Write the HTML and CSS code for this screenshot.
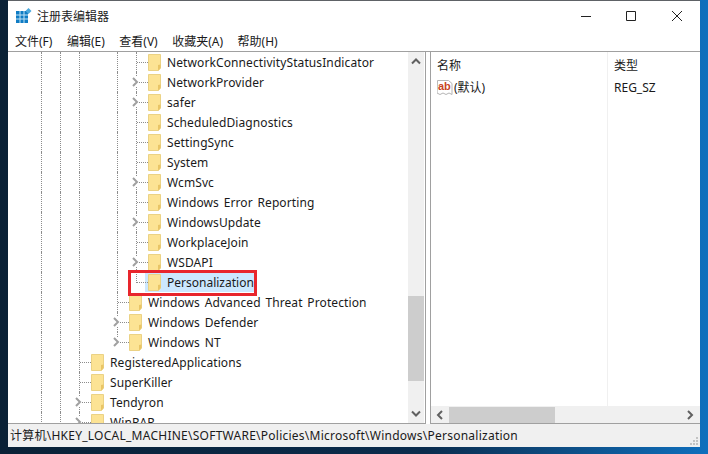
FILE: index.html
```html
<!DOCTYPE html>
<html lang="zh-CN">
<head>
<meta charset="utf-8">
<title>注册表编辑器</title>
<link rel="stylesheet" href="styles.css">
</head>
<body>
<svg class="defs" width="0" height="0">
  <symbol id="folder" viewBox="0 0 13 17">
    <path d="M.5.5h12v13.500l-2 2.500h-10z" fill="#fce394" stroke="#ebd285"/>
    <path d="M10 11l2.500-.5v3.500l-2.500 2.500z" fill="#e9c566"/>
  </symbol>
  <symbol id="chev" viewBox="0 0 7 10">
    <path d="M1 1l4 4-4 4" fill="none" stroke="#a0a0a0" stroke-width="2"/>
  </symbol>
</svg>
<div class="window">
  <header class="titlebar">
    <svg class="appicon" width="16" height="16" viewBox="0 0 16 16">
      <path d="M0 3h12v12H0z" fill="#0f7cc4"/>
      <path d="M4 3v12M8 3v12M0 7h12M0 11h12" stroke="#bfe2f5" stroke-width="1"/>
      <path d="M12.500 0l3 3-3 3-3-3z" fill="#4ba8dc"/>
    </svg>
    <span class="title">注册表编辑器</span>
    <div class="controls">
      <svg width="10" height="10" viewBox="0 0 10 10"><path d="M0 5.500h10" stroke="#222"/></svg>
      <svg width="10" height="10" viewBox="0 0 10 10"><path d="M.5.500h9v9h-9z" fill="none" stroke="#222"/></svg>
      <svg width="10" height="10" viewBox="0 0 10 10"><path d="M0 0l10 10M10 0L0 10" stroke="#222"/></svg>
    </div>
  </header>
  <nav class="menubar">
    <span>文件(F)</span><span>编辑(E)</span><span>查看(V)</span><span>收藏夹(A)</span><span>帮助(H)</span>
  </nav>
  <main class="panes">
    <section class="treepane">
      <div class="tree">
        <div class="row"><i class="g on"></i><i class="g on"></i><i class="g on"></i><i class="g"></i><i class="g on"></i><i class="conn"></i><span class="item"><svg class="fd"><use href="#folder"/></svg>NetworkConnectivityStatusIndicator</span></div>
        <div class="row"><i class="g on"></i><i class="g on"></i><i class="g on"></i><i class="g"></i><i class="g on"></i><i class="conn"><svg class="ch"><use href="#chev"/></svg></i><span class="item"><svg class="fd"><use href="#folder"/></svg>NetworkProvider</span></div>
        <div class="row"><i class="g on"></i><i class="g on"></i><i class="g on"></i><i class="g"></i><i class="g on"></i><i class="conn"><svg class="ch"><use href="#chev"/></svg></i><span class="item"><svg class="fd"><use href="#folder"/></svg>safer</span></div>
        <div class="row"><i class="g on"></i><i class="g on"></i><i class="g on"></i><i class="g"></i><i class="g on"></i><i class="conn"></i><span class="item"><svg class="fd"><use href="#folder"/></svg>ScheduledDiagnostics</span></div>
        <div class="row"><i class="g on"></i><i class="g on"></i><i class="g on"></i><i class="g"></i><i class="g on"></i><i class="conn"></i><span class="item"><svg class="fd"><use href="#folder"/></svg>SettingSync</span></div>
        <div class="row"><i class="g on"></i><i class="g on"></i><i class="g on"></i><i class="g"></i><i class="g on"></i><i class="conn"></i><span class="item"><svg class="fd"><use href="#folder"/></svg>System</span></div>
        <div class="row"><i class="g on"></i><i class="g on"></i><i class="g on"></i><i class="g"></i><i class="g on"></i><i class="conn"><svg class="ch"><use href="#chev"/></svg></i><span class="item"><svg class="fd"><use href="#folder"/></svg>WcmSvc</span></div>
        <div class="row"><i class="g on"></i><i class="g on"></i><i class="g on"></i><i class="g"></i><i class="g on"></i><i class="conn"></i><span class="item"><svg class="fd"><use href="#folder"/></svg>Windows Error Reporting</span></div>
        <div class="row"><i class="g on"></i><i class="g on"></i><i class="g on"></i><i class="g"></i><i class="g on"></i><i class="conn"><svg class="ch"><use href="#chev"/></svg></i><span class="item"><svg class="fd"><use href="#folder"/></svg>WindowsUpdate</span></div>
        <div class="row"><i class="g on"></i><i class="g on"></i><i class="g on"></i><i class="g"></i><i class="g on"></i><i class="conn"></i><span class="item"><svg class="fd"><use href="#folder"/></svg>WorkplaceJoin</span></div>
        <div class="row"><i class="g on"></i><i class="g on"></i><i class="g on"></i><i class="g"></i><i class="g on"></i><i class="conn"><svg class="ch"><use href="#chev"/></svg></i><span class="item"><svg class="fd"><use href="#folder"/></svg>WSDAPI</span></div>
        <div class="row"><i class="g on"></i><i class="g on"></i><i class="g on"></i><i class="g"></i><i class="g on"></i><i class="conn last"></i><span class="item selected"><svg class="fd"><use href="#folder"/></svg>Personalization</span><b class="redbox"></b></div>
        <div class="row"><i class="g on"></i><i class="g on"></i><i class="g on"></i><i class="g"></i><i class="conn"></i><span class="item"><svg class="fd"><use href="#folder"/></svg>Windows Advanced Threat Protection</span></div>
        <div class="row"><i class="g on"></i><i class="g on"></i><i class="g on"></i><i class="g"></i><i class="conn"><svg class="ch"><use href="#chev"/></svg></i><span class="item"><svg class="fd"><use href="#folder"/></svg>Windows Defender</span></div>
        <div class="row"><i class="g on"></i><i class="g on"></i><i class="g on"></i><i class="g"></i><i class="conn last"><svg class="ch"><use href="#chev"/></svg></i><span class="item"><svg class="fd"><use href="#folder"/></svg>Windows NT</span></div>
        <div class="row"><i class="g on"></i><i class="g on"></i><i class="conn"></i><span class="item"><svg class="fd"><use href="#folder"/></svg>RegisteredApplications</span></div>
        <div class="row"><i class="g on"></i><i class="g on"></i><i class="conn"></i><span class="item"><svg class="fd"><use href="#folder"/></svg>SuperKiller</span></div>
        <div class="row"><i class="g on"></i><i class="g on"></i><i class="conn"><svg class="ch"><use href="#chev"/></svg></i><span class="item"><svg class="fd"><use href="#folder"/></svg>Tendyron</span></div>
        <div class="row"><i class="g on"></i><i class="g on"></i><i class="conn"><svg class="ch"><use href="#chev"/></svg></i><span class="item"><svg class="fd"><use href="#folder"/></svg>WinRAR</span></div>
      </div>
      <div class="vscroll">
        <svg class="arrow" width="16" height="17" viewBox="0 0 16 17"><path d="M4 11.500l4-4 4 4" fill="none" stroke="#606060" stroke-width="2"/></svg>
        <div class="vspace"></div>
        <div class="vthumb"></div>
        <div class="vspace2"></div>
        <svg class="arrow" width="16" height="17" viewBox="0 0 16 17"><path d="M4 5.500l4 4 4-4" fill="none" stroke="#606060" stroke-width="2"/></svg>
      </div>
    </section>
    <section class="listpane">
      <div class="listbody">
        <div class="lhead"><span class="cname">名称</span><span class="ctype">类型</span></div>
        <div class="lrow">
          <span class="cname"><svg class="abicon" width="16" height="17" viewBox="0 0 16 17"><path d="M.5 1.500h11l3.500 3v11l-3-1.500-3 1.500-3-1.500-3 1.500-3-1.500z" fill="#fff" stroke="#b5b5b5"/><text class="abtext" x="1" y="11">ab</text></svg>(默认)</span>
          <span class="ctype">REG_SZ</span>
        </div>
      </div>
      <div class="hscroll">
        <svg class="arrow" width="18" height="16" viewBox="0 0 18 16"><path d="M11 4L7 8l4 4" fill="none" stroke="#606060" stroke-width="2"/></svg>
        <div class="hthumb"></div>
        <div class="hspace"></div>
        <svg class="arrow" width="18" height="16" viewBox="0 0 18 16"><path d="M6 4l4 4-4 4" fill="none" stroke="#606060" stroke-width="2"/></svg>
      </div>
    </section>
  </main>
  <footer class="status">
    <span class="path">计算机\HKEY_LOCAL_MACHINE\SOFTWARE\Policies\Microsoft\Windows\Personalization</span>
    <svg class="grip" width="10" height="10" viewBox="0 0 10 10"><path d="M7 1h2v2H7zM4 4h2v2H4zM7 4h2v2H7zM1 7h2v2H1zM4 7h2v2H4zM7 7h2v2H7z" fill="#c4c4c4"/></svg>
  </footer>
</div>
</body>
</html>
```
FILE: styles.css
```css
* { box-sizing: border-box; }
html, body { margin: 0; height: 100%; }
body {
  width: 708px;
  height: 454px;
  overflow: hidden;
  padding: 0 8px 7px;
  background: linear-gradient(to right, #0a2136 0%, #0b2c4d 60%, #0f6fbd 100%);
  font-family: "Noto Sans", "Noto Sans CJK SC", sans-serif;
  font-size: 12px;
  color: #1a1a1a;
}
.defs { position: absolute; }
.window {
  width: 692px;
  height: 447px;
  background: #fff;
  border-top: 1px solid #5e6266;
  display: flex;
  flex-direction: column;
}
.titlebar {
  height: 30px;
  display: flex;
  align-items: center;
  padding-left: 8px;
  padding-bottom: 1px;
  flex: none;
}
.appicon { margin-right: 5px; }
.title { font-size: 12px; color: #222; }
.controls {
  margin-left: auto;
  display: flex;
  gap: 35px;
  padding-right: 18px;
}
.controls svg:last-child { margin-left: 1px; }
.menubar {
  height: 21px;
  flex: none;
  display: flex;
  align-items: center;
  padding-left: 7px;
  border-bottom: 1px solid #a0a0a0;
  gap: 14.5px;
}
.panes { flex: 1; display: flex; min-height: 0; background: #fff; }
.treepane {
  width: 418px;
  flex: none;
  display: flex;
  border-right: 1px solid #a0a0a0;
  border-bottom: 1px solid #a0a0a0;
}
.tree {
  flex: 1;
  overflow: hidden;
  padding-left: 33px;
  min-width: 0;
  letter-spacing: .1px;
  word-spacing: 1.5px;
}
.row {
  height: 20px;
  display: flex;
  align-items: stretch;
  position: relative;
  white-space: nowrap;
}
.g { width: 19px; flex: none; }
.g.on { border-left: 1px dotted #8c8c8c; }
.conn {
  width: 12px;
  flex: none;
  position: relative;
  border-left: 1px dotted #8c8c8c;
}
.conn.last { height: 11px; }
.conn::after {
  content: "";
  position: absolute;
  left: 0;
  right: 0;
  top: 10px;
  border-top: 1px dotted #8c8c8c;
}
.ch {
  position: absolute;
  left: -5px;
  top: 5px;
  width: 7px;
  height: 10px;
  z-index: 1;
  background: #fff;
}
.item { display: flex; align-items: center; height: 20px; }
.fd { width: 13px; height: 17px; margin-right: 6px; flex: none; }
.selected { background: #cce8ff; margin-left: -3px; padding-left: 3px; padding-right: 1px; letter-spacing: 0; }
.redbox {
  position: absolute;
  left: 87px;
  top: -2px;
  width: 129px;
  height: 26px;
  border: 3px solid #e8262d;
  z-index: 2;
}
.vscroll {
  width: 16px;
  flex: none;
  background: #f0f0f0;
  margin-right: 1px;
  display: flex;
  flex-direction: column;
}
.arrow { flex: none; display: block; }
.vspace { height: 227px; flex: none; }
.vthumb { height: 85px; background: #cdcdcd; flex: none; }
.vspace2 { flex: 1; }
.listpane {
  margin-left: 4px;
  flex: 1;
  min-width: 0;
  border-left: 1px solid #a0a0a0;
  border-bottom: 1px solid #a0a0a0;
  display: flex;
  flex-direction: column;
}
.listbody {
  flex: 1;
  background: linear-gradient(#f0f0f0, #f0f0f0) 176px 0 / 1px 100% no-repeat;
}
.lhead { height: 25px; display: flex; align-items: center; }
.lrow { height: 20px; display: flex; align-items: center; }
.cname { width: 183px; padding-left: 6px; flex: none; display: flex; align-items: center; }
.abicon { margin-right: 1px; }
.abtext { font: 700 11px "Liberation Sans", sans-serif; fill: #c8451f; }
.hscroll { height: 17px; background: #f0f0f0; display: flex; align-items: center; flex: none; }
.hthumb { width: 106px; height: 16px; background: #cdcdcd; flex: none; }
.hspace { flex: 1; }
.status {
  height: 23px;
  flex: none;
  background: #f0f0f0;
  display: flex;
  align-items: center;
  justify-content: space-between;
  padding-left: 2px;
  padding-bottom: 1px;
  white-space: nowrap;
}
.path { letter-spacing: .25px; }
.grip { margin: 11px 1px 0 0; }
```
